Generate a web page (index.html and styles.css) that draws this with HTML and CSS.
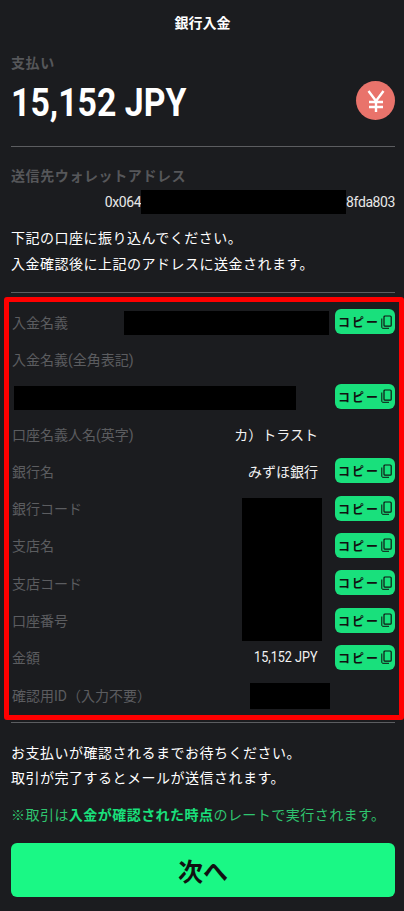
FILE: index.html
```html
<!DOCTYPE html>
<html lang="ja">
<head>
    <meta charset="utf-8">
    <title>銀行入金</title>
    <link rel="stylesheet" href="styles.css">
</head>
<body>
    <svg class="icon-defs" width="0" height="0">
        <symbol id="copyIcon" viewBox="0 0 11 14">
            <path d="M0.8 3.5V12.4C0.8 13 1.2 13.3 1.7 13.3H8" fill="none" stroke="currentColor" stroke-width="1"/>
            <rect x="3" y="1" width="7.2" height="10.2" rx="1" fill="none" stroke="currentColor" stroke-width="1.2"/>
        </symbol>
    </svg>

    <h1 class="page-title">銀行入金</h1>

    <section class="section pay-section">
        <div class="section-label">支払い</div>
        <div class="pay-row">
            <span class="pay-amount">15,152 JPY</span>
            <span class="yen-badge">
                <svg width="22" height="24" viewBox="0 0 22 24">
                    <path d="M3.5 2L11 12L18.5 2M11 12V23M4 13H18M4 18H18" fill="none" stroke="#fff" stroke-width="2.4"/>
                </svg>
            </span>
        </div>
    </section>

    <section class="section wallet-section">
        <div class="section-label">送信先ウォレットアドレス</div>
        <div class="wallet-address">
            <span>0x064</span>
            <span class="redact redact-wallet"></span>
            <span>8fda803</span>
        </div>
        <p class="note">下記の口座に振り込んでください。<br>入金確認後に上記のアドレスに送金されます。</p>
    </section>

    <div class="bank-box">
        <div class="bank-row">
            <span class="bank-label">入金名義</span>
            <span class="redact redact-name"></span>
            <button class="copy-btn">コピー<svg class="copy-icon"><use href="#copyIcon"/></svg></button>
        </div>
        <div class="bank-row">
            <span class="bank-label">入金名義(全角表記)</span>
        </div>
        <div class="bank-row">
            <span class="redact redact-wide"></span>
            <button class="copy-btn push-right">コピー<svg class="copy-icon"><use href="#copyIcon"/></svg></button>
        </div>
        <div class="bank-row">
            <span class="bank-label">口座名義人名(英字)</span>
            <span class="bank-value">カ）トラスト</span>
            <span class="copy-space"></span>
        </div>
        <div class="bank-row">
            <span class="bank-label">銀行名</span>
            <span class="bank-value">みずほ銀行</span>
            <button class="copy-btn">コピー<svg class="copy-icon"><use href="#copyIcon"/></svg></button>
        </div>
        <div class="bank-row">
            <span class="bank-label">銀行コード</span>
            <button class="copy-btn push-right">コピー<svg class="copy-icon"><use href="#copyIcon"/></svg></button>
        </div>
        <div class="bank-row">
            <span class="bank-label">支店名</span>
            <button class="copy-btn push-right">コピー<svg class="copy-icon"><use href="#copyIcon"/></svg></button>
        </div>
        <div class="bank-row">
            <span class="bank-label">支店コード</span>
            <button class="copy-btn push-right">コピー<svg class="copy-icon"><use href="#copyIcon"/></svg></button>
        </div>
        <div class="bank-row">
            <span class="bank-label">口座番号</span>
            <button class="copy-btn push-right">コピー<svg class="copy-icon"><use href="#copyIcon"/></svg></button>
        </div>
        <div class="bank-row">
            <span class="bank-label">金額</span>
            <span class="bank-value latin-value">15,152 JPY</span>
            <button class="copy-btn">コピー<svg class="copy-icon"><use href="#copyIcon"/></svg></button>
        </div>
        <div class="bank-row">
            <span class="bank-label">確認用ID（入力不要）</span>
            <span class="redact redact-id"></span>
        </div>
        <span class="redact redact-block"></span>
    </div>

    <section class="section footer-section">
        <p class="note">お支払いが確認されるまでお待ちください。<br>取引が完了するとメールが送信されます。</p>
        <p class="rate-note">※取引は<b>入金が確認された時点</b>のレートで実行されます。</p>
        <button class="next-btn">次へ</button>
    </section>
</body>
</html>
```

FILE: styles.css
```css
body {
    font-family: Roboto, "Noto Sans CJK JP", sans-serif;
    background-color: #1b1c1f;
    color: #fff;
    margin: 0;
}

.icon-defs {
    position: absolute;
}

.page-title {
    margin: 0;
    padding: 13px 0 0 1px;
    height: 23px;
    line-height: 20px;
    font-size: 14px;
    font-weight: 700;
    text-align: center;
}

.section {
    margin: 0 9px 0 11px;
}

.section-label {
    font-size: 14px;
    line-height: 20px;
    font-weight: 700;
    color: #56575a;
    letter-spacing: 0.6px;
}

.pay-section {
    padding-top: 17px;
    height: 93px;
    border-bottom: 1px solid #5c5d60;
}

.pay-row {
    display: flex;
    justify-content: space-between;
    align-items: center;
    height: 60px;
}

.pay-amount {
    font-size: 38px;
    font-weight: 700;
    transform: scaleX(0.89);
    transform-origin: left center;
}

.yen-badge {
    display: flex;
    align-items: center;
    justify-content: center;
    width: 39px;
    height: 39px;
    margin-bottom: 5px;
    border-radius: 50%;
    background-color: #e9736b;
}

.wallet-section {
    padding-top: 19px;
    height: 126px;
    border-bottom: 1px solid #5c5d60;
}

.wallet-address {
    display: flex;
    justify-content: flex-end;
    align-items: center;
    height: 24px;
    margin-top: 4px;
    font-size: 14px;
    letter-spacing: -0.4px;
    color: #e8e8e8;
}

.redact {
    display: block;
    background-color: #000;
}

.redact-wallet {
    width: 205px;
    height: 24px;
}

.note {
    margin: 11px 0 0;
    font-size: 14px;
    line-height: 26px;
    letter-spacing: 0.5px;
}

.bank-box {
    position: relative;
    margin: 4px 0 0 4px;
    padding: 1px 4px 0 3px;
    height: 412px;
    border: 5px solid #f00;
    border-radius: 3px;
}

.bank-row {
    display: flex;
    align-items: center;
    height: 37.3px;
}

.bank-label {
    font-size: 14px;
    color: #5c5d60;
    white-space: nowrap;
}

.bank-value {
    margin-left: auto;
    margin-right: 17px;
    font-size: 14px;
    color: #f2f2f2;
}

.latin-value {
    font-size: 14px;
    transform: scaleX(0.9);
    transform-origin: right center;
}

.copy-space {
    width: 60px;
}

.copy-btn {
    display: flex;
    align-items: center;
    justify-content: center;
    gap: 1px;
    width: 60px;
    height: 25px;
    padding: 0;
    border: 0;
    border-radius: 6px;
    background-color: #19e07c;
    color: #111;
    font-family: inherit;
    font-size: 12px;
    font-weight: 700;
    letter-spacing: 2px;
    white-space: nowrap;
}

.copy-icon {
    width: 11px;
    height: 14px;
}

.push-right {
    margin-left: auto;
}

.redact-name {
    width: 205px;
    height: 24px;
    margin-top: 2px;
    margin-left: auto;
    margin-right: 6px;
}

.redact-wide {
    width: 282px;
    height: 24px;
    margin-top: 4px;
    margin-left: 2px;
}

.redact-id {
    width: 80px;
    height: 26px;
    margin-top: 2px;
    margin-left: auto;
    margin-right: 65px;
}

.redact-block {
    position: absolute;
    top: 196px;
    left: 233px;
    width: 80px;
    height: 143px;
}

.footer-section {
    padding-top: 18px;
    margin-top: 2px;
    border-top: 1px solid #5c5d60;
}

.footer-section .note {
    margin: 0;
    line-height: 25px;
}

.rate-note {
    margin: 11px 0 0;
    font-size: 14px;
    line-height: 26px;
    color: #2fc46f;
    letter-spacing: 0.46px;
    white-space: nowrap;
}

.rate-note b {
    color: #19e07c;
}

.next-btn {
    display: block;
    width: 100%;
    height: 54px;
    margin-top: 15px;
    border: 0;
    border-radius: 6px;
    background-color: #1af885;
    color: #111;
    font-family: inherit;
    font-size: 25px;
    font-weight: 700;
}
```
